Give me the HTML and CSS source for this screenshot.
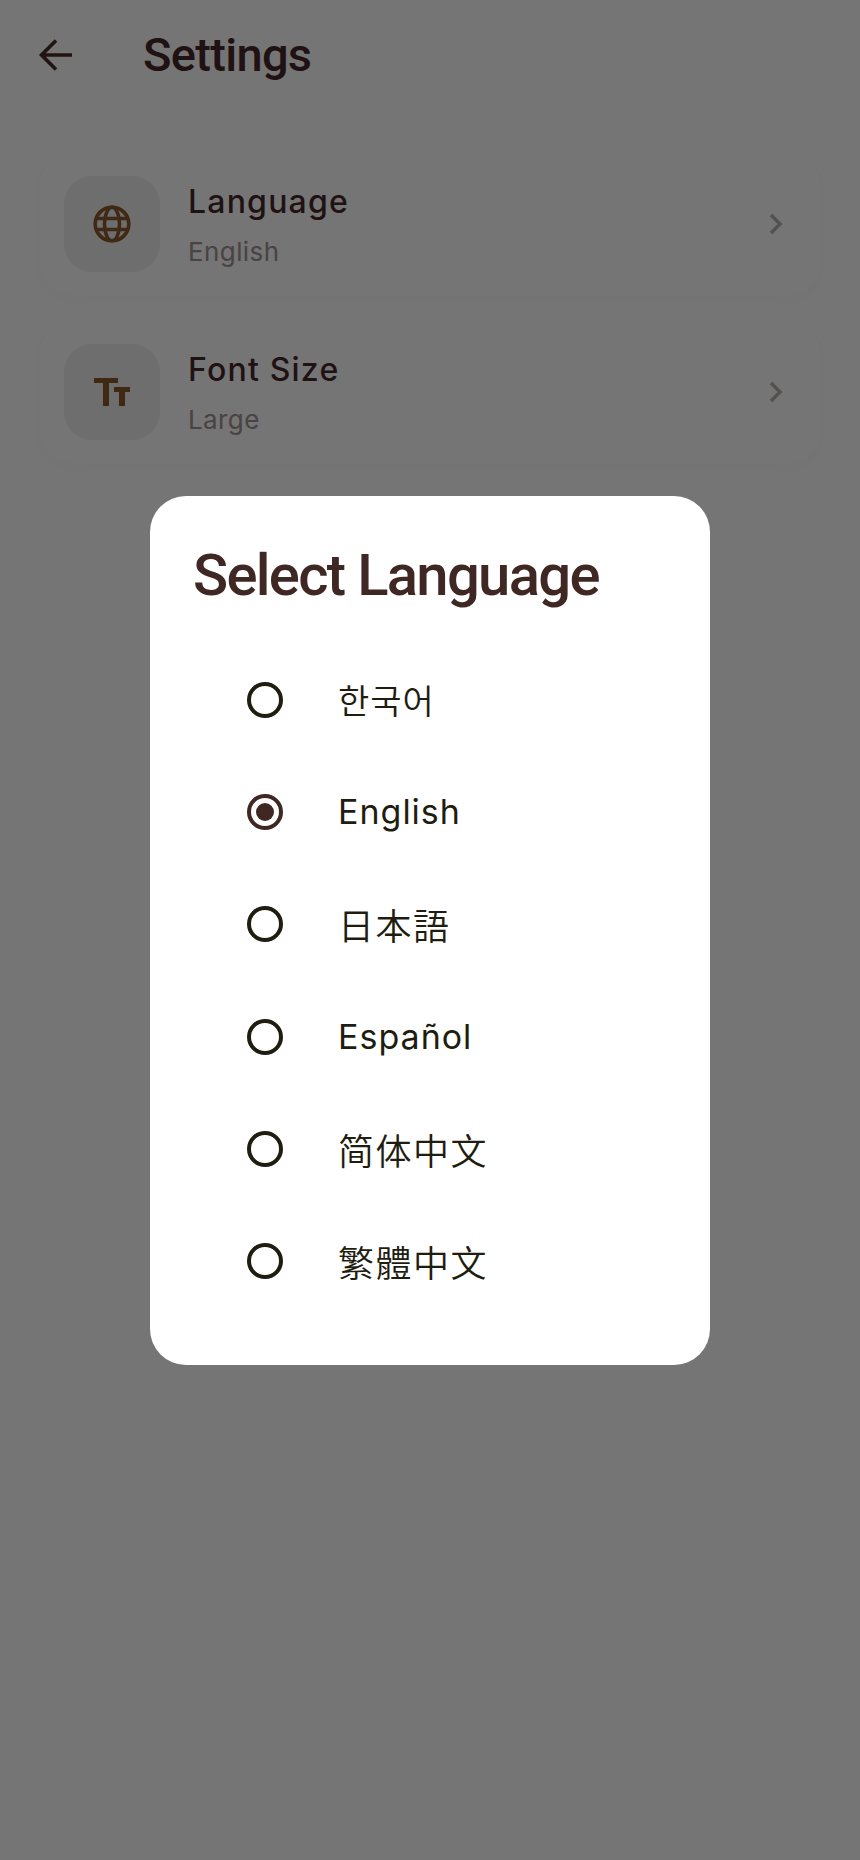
FILE: index.html
```html
<!DOCTYPE html>
<html lang="en">
<head>
<meta charset="utf-8">
<title>Settings</title>
<link rel="stylesheet" href="styles.css">
</head>
<body>
<div class="screen">
  <header class="topbar">
    <svg class="back" viewBox="0 0 36 36" width="36" height="36"><path d="M34 18H4M18 3.500 3.500 18 18 32.500" fill="none" stroke="#4a2d28" stroke-width="3.600"/></svg>
    <h1 class="page-title">Settings</h1>
  </header>
  <main class="list">
    <section class="card">
      <div class="icon-box">
        <svg viewBox="0 0 38 38" width="38" height="38" fill="none" stroke="#8a5a28" stroke-width="3.600"><circle cx="19" cy="19" r="16.800"/><ellipse cx="19" cy="19" rx="7.500" ry="16.800"/><path d="M3 13.500H35M3 24.500H35"/></svg>
      </div>
      <div class="card-text">
        <div class="card-title">Language</div>
        <div class="card-sub">English</div>
      </div>
      <svg class="chev" viewBox="0 0 14 22" width="14" height="22"><path d="M2 2 11 11 2 20" fill="none" stroke="#b8b0b0" stroke-width="3.400"/></svg>
    </section>
    <section class="card">
      <div class="icon-box">
        <svg viewBox="0 0 36 28" width="36" height="28" fill="#8a5a28"><path d="M0 0H24V5H15V28H9V5H0ZM20 9H36V14H31V28H25V14H20Z"/></svg>
      </div>
      <div class="card-text">
        <div class="card-title">Font Size</div>
        <div class="card-sub">Large</div>
      </div>
      <svg class="chev" viewBox="0 0 14 22" width="14" height="22"><path d="M2 2 11 11 2 20" fill="none" stroke="#b8b0b0" stroke-width="3.400"/></svg>
    </section>
  </main>
</div>
<div class="scrim">
  <div class="dialog">
    <h2 class="dialog-title">Select Language</h2>
    <ul class="options">
      <li class="option"><span class="radio"></span><span class="label ko">한국어</span></li>
      <li class="option"><span class="radio selected"></span><span class="label">English</span></li>
      <li class="option"><span class="radio"></span><span class="label jp">日本語</span></li>
      <li class="option"><span class="radio"></span><span class="label">Español</span></li>
      <li class="option"><span class="radio"></span><span class="label sc">简体中文</span></li>
      <li class="option"><span class="radio"></span><span class="label tc">繁體中文</span></li>
    </ul>
  </div>
</div>
</body>
</html>
```
FILE: styles.css
```css
* { box-sizing: border-box; }
html, body { margin: 0; padding: 0; }
body {
  width: 860px;
  height: 1860px;
  overflow: hidden;
  background: #ffffff;
  font-family: Inter, "Noto Sans CJK KR", sans-serif;
}
.screen { height: 1860px; }
.topbar {
  height: 110px;
  display: flex;
  align-items: center;
  padding-left: 38px;
}
.back { flex: none; }
.page-title {
  margin: 0 0 2px 69px;
  font: 500 47px/1 Roboto, sans-serif;
  letter-spacing: -.7px;
  color: #46292a;
}
.list {
  padding: 41px 40px 0;
  display: flex;
  flex-direction: column;
  gap: 23px;
}
.card {
  height: 145px;
  border-radius: 36px;
  background: #ffffff;
  box-shadow: 0 4px 16px rgba(60,60,30,.03);
  display: flex;
  align-items: center;
  padding: 0 37px 0 24px;
}
.icon-box {
  width: 96px;
  height: 96px;
  flex: none;
  border-radius: 28px;
  background: #f0efef;
  display: flex;
  align-items: center;
  justify-content: center;
}
.card-text { flex: 1; margin-left: 28px; padding-top: 3px; }
.card-title {
  font-size: 32px;
  line-height: 40px;
  font-weight: 500;
  letter-spacing: 1.200px;
  color: #46292a;
}
.card-sub {
  margin-top: 14px;
  font-size: 26px;
  line-height: 32px;
  letter-spacing: .4px;
  color: #a09292;
}
.chev { flex: none; }
.scrim {
  position: fixed;
  inset: 0;
  background: rgba(0,0,0,.54);
  display: flex;
  align-items: center;
  justify-content: center;
}
.dialog {
  width: 560px;
  height: 869px;
  border-radius: 36px;
  background: #fff;
  padding: 47px 43px 0;
}
.dialog-title {
  margin: 0;
  font: 500 58px/64px Roboto, sans-serif;
  letter-spacing: -1.700px;
  color: #3f2723;
}
.options {
  list-style: none;
  margin: 37px 0 0;
  padding: 0 0 0 54px;
}
.option {
  height: 112.300px;
  display: flex;
  align-items: center;
}
.radio {
  width: 36px;
  height: 36px;
  flex: none;
  border-radius: 50%;
  border: 4px solid #1e1d10;
  display: flex;
  align-items: center;
  justify-content: center;
}
.radio.selected { border-color: #3f2723; }
.radio.selected::after {
  content: "";
  width: 18px;
  height: 18px;
  border-radius: 50%;
  background: #3f2723;
}
.label {
  margin-left: 55px;
  font-size: 34px;
  font-weight: 400;
  letter-spacing: 1px;
  color: #1e1d10;
}
.ko { font-weight: 350; }
.jp, .sc, .tc { font-size: 36px; letter-spacing: 1.500px; font-weight: 350; }
.jp { font-family: "Noto Sans CJK JP", sans-serif; }
.sc { font-family: "Noto Sans CJK SC", sans-serif; }
.tc { font-family: "Noto Sans CJK TC", sans-serif; }
```
